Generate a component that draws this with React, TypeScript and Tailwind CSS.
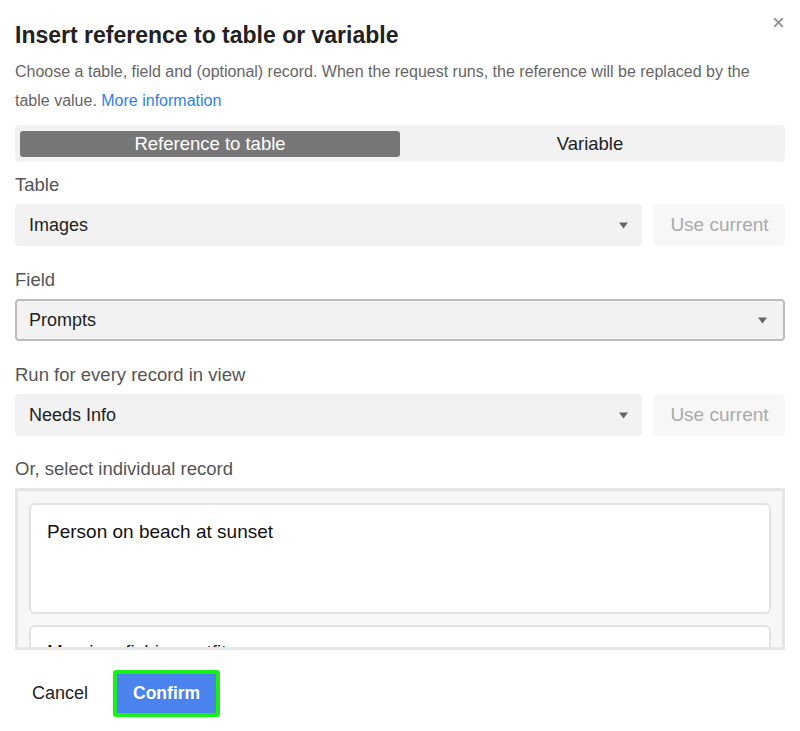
import { X } from "lucide-react";

const Caret = () => (
  <svg width="9" height="7" viewBox="0 0 9 7" className="shrink-0">
    <path d="M0 0.5h9L4.5 6.5z" fill="#666" />
  </svg>
);

const Label = ({ children }: { children: React.ReactNode }) => (
  <div className="text-[18.5px] leading-6 text-[#555]">{children}</div>
);

const Select = ({ value, bordered }: { value: string; bordered?: boolean }) => (
  <div
    className={
      bordered
        ? "flex-1 h-[42px] flex items-center justify-between pl-[12px] pr-[16px] bg-[#f2f2f2] rounded-[4px] border-2 border-[#bdbdbd]"
        : "flex-1 h-[42px] flex items-center justify-between pl-[14px] pr-[14px] bg-[#f2f2f2] rounded-[4px]"
    }
  >
    <span className="text-[18px] text-[#222]">{value}</span>
    <Caret />
  </div>
);

const UseCurrent = () => (
  <div className="w-[131px] h-[42px] flex items-center justify-center bg-[#f7f7f7] rounded-[4px] text-[19px] text-[#aaa]">
    Use current
  </div>
);

export default function App() {
  return (
    <div className="w-[800px] h-[731px] bg-white relative px-[15px] pt-[20px] font-['Liberation_Sans',Arial,sans-serif]">
      <button className="absolute right-[14px] top-[15px] text-[#9a9a9a]">
        <X size={15} strokeWidth={3} />
      </button>

      <h1 className="text-[23px] leading-[30px] font-bold text-[#222]">Insert reference to table or variable</h1>
      <p className="mt-[7px] text-[16px] leading-[29px] text-[#666]">
        Choose a table, field and (optional) record. When the request runs, the reference will be replaced by the table
        value. <a className="text-[#2d7ff9]">More information</a>
      </p>

      <div className="mt-[10px] grid grid-cols-2 bg-[#f2f2f2] rounded-[4px] pt-[6px] pb-[5px] px-[5px]">
        <div className="h-[26px] flex items-center justify-center bg-[#777] rounded-[3px] text-[18.5px] text-white">
          Reference to table
        </div>
        <div className="h-[26px] flex items-center justify-center text-[18.5px] text-[#222]">Variable</div>
      </div>

      <div className="mt-[11px]">
        <Label>Table</Label>
        <div className="mt-[7px] flex gap-[12px]">
          <Select value="Images" />
          <UseCurrent />
        </div>
      </div>

      <div className="mt-[22px]">
        <Label>Field</Label>
        <div className="mt-[7px] flex">
          <Select value="Prompts" bordered />
        </div>
      </div>

      <div className="mt-[22px]">
        <Label>Run for every record in view</Label>
        <div className="mt-[7px] flex gap-[12px]">
          <Select value="Needs Info" />
          <UseCurrent />
        </div>
      </div>

      <div className="mt-[21px]">
        <Label>Or, select individual record</Label>
        <div className="mt-[7px] h-[162px] overflow-hidden border-[3px] border-[#e6e6e6] bg-[#f7f7f7] pt-[12px] px-[11px] flex flex-col gap-[11px]">
          <div className="shrink-0 h-[111px] bg-white border-2 border-[#e3e3e3] rounded-[6px] pl-[16px] pt-[15px] text-[19px] leading-6 text-[#111]">
            Person on beach at sunset
          </div>
          <div className="shrink-0 h-[111px] bg-white border-2 border-[#e3e3e3] rounded-[6px] pl-[16px] pt-[13px] text-[19px] leading-6 text-[#111]">
            Man in a fishing outfit
          </div>
        </div>
      </div>

      <div className="mt-[20px] flex items-center gap-[25px] pl-[17px]">
        <button className="text-[18px] text-[#222]">Cancel</button>
        <button className="h-[47px] px-[16px] bg-[#4a82ee] border-4 border-[#19f019] rounded-[3px] text-[17.5px] font-semibold text-white">
          Confirm
        </button>
      </div>
    </div>
  );
}
